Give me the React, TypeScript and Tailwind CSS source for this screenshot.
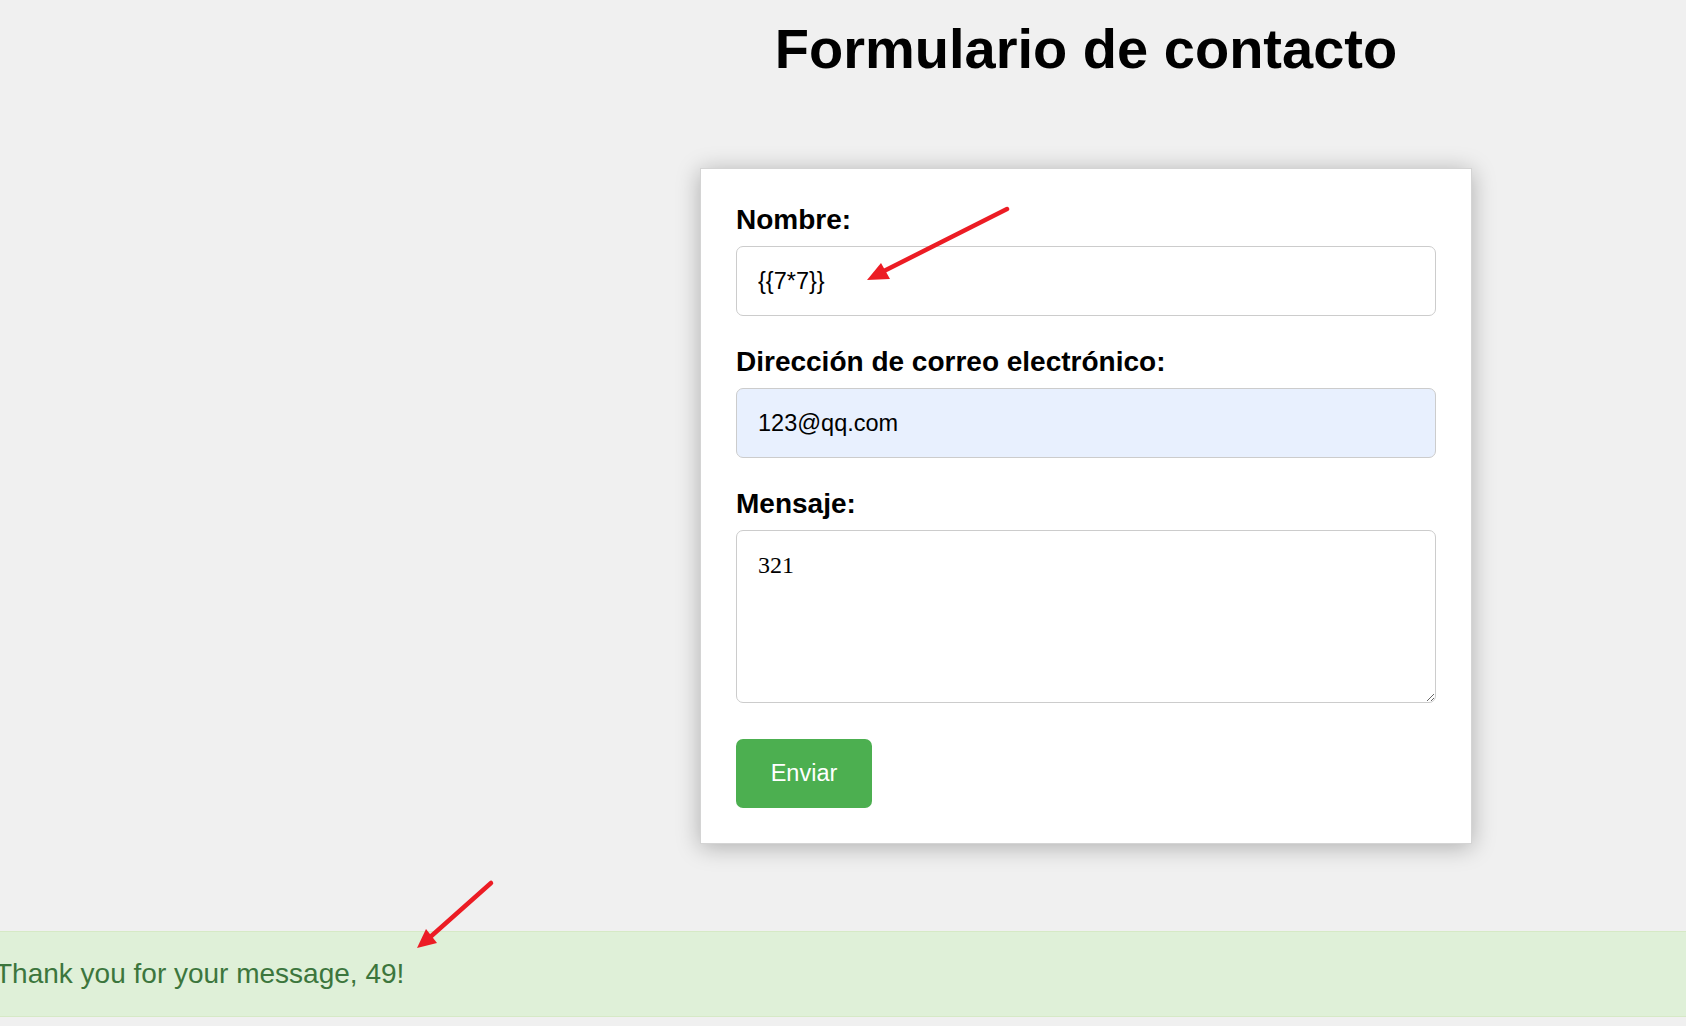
import React from "react";

export default function App() {
  const sans = { fontFamily: '"Liberation Sans", Arial, sans-serif' };
  return (
    <div className="relative min-h-screen w-full overflow-hidden bg-[#f0f0f0] text-black" style={sans}>
      <div className="flex flex-col ml-[700px] w-[772px]">
        <h1 className="mt-[17px] text-center text-[56px] leading-[64px] font-bold">Formulario de contacto</h1>
        <div className="mt-[87px] flex flex-col bg-white border border-[#d4d4d4] shadow-[0_3px_22px_rgba(0,0,0,0.28)] px-[35px] pt-[35px] pb-[35px]">
          <label className="text-[28px] leading-[31px] font-bold">Nombre:</label>
          <input
            readOnly
            value="{{7*7}}"
            className="mt-[11px] h-[70px] w-full rounded-[7px] border border-[#cccccc] bg-white px-[21px] text-[23.5px] text-black outline-none"
            style={sans}
          />
          <label className="mt-[30px] text-[28px] leading-[31px] font-bold">Dirección de correo electrónico:</label>
          <input
            readOnly
            value="123@qq.com"
            className="mt-[11px] h-[70px] w-full rounded-[7px] border border-[#cccccc] bg-[#e8f0fe] px-[21px] text-[23.5px] text-black outline-none"
            style={sans}
          />
          <label className="mt-[30px] text-[28px] leading-[31px] font-bold">Mensaje:</label>
          <textarea
            readOnly
            value="321"
            className="mt-[11px] h-[173px] w-full rounded-[7px] border border-[#cccccc] bg-white px-[21px] pt-[20px] text-[24px] leading-[28px] text-black outline-none"
            style={{ fontFamily: '"Liberation Serif", "Times New Roman", serif' }}
          />
          <div className="mt-[36px] flex">
            <button className="h-[69px] w-[136px] rounded-[7px] bg-[#4caf50] text-[23.5px] text-white" style={sans}>
              Enviar
            </button>
          </div>
        </div>
      </div>
      <div className="mt-[87px] border-y border-[#d6e9c6] bg-[#dff0d8] pt-[26px] pb-[27px]">
        <p className="-ml-[5px] text-[28px] leading-[31px] text-[#3c763d] whitespace-nowrap">Thank you for your message, 49!</p>
      </div>
      <svg className="pointer-events-none absolute left-0 top-0" width="1686" height="1026" viewBox="0 0 1686 1026">
        <line x1="1007" y1="209" x2="880" y2="273" stroke="#ec1c24" strokeWidth="4.5" strokeLinecap="round" />
        <polygon points="867,280 881,263 890,279" fill="#ec1c24" />
        <line x1="491" y1="883" x2="428" y2="939" stroke="#ec1c24" strokeWidth="4.5" strokeLinecap="round" />
        <polygon points="417,948 426,929 437,943" fill="#ec1c24" />
      </svg>
    </div>
  );
}
